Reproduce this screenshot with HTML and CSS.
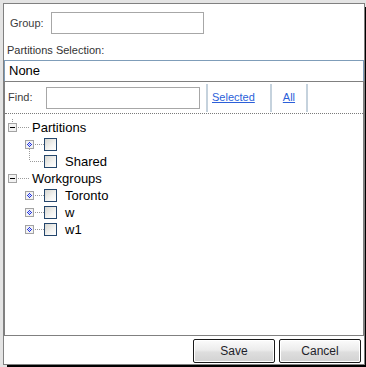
FILE: index.html
```html
<!DOCTYPE html>
<html lang="en">
<head>
  <meta charset="UTF-8">
  <title>Group Partitions</title>
  <link rel="stylesheet" href="styles.css">
</head>
<body>
  <div class="dialog">
    <!-- Group name -->
    <div class="group-row">
      <label class="field-label group-label">Group:</label>
      <input type="text" class="text-input group-input">
    </div>

    <div class="section-label">Partitions Selection:</div>
    <div class="selection-box">None</div>

    <div class="panel">
      <!-- Find bar -->
      <div class="find-row">
        <label class="field-label find-label">Find:</label>
        <input type="text" class="text-input find-input">
        <span class="sep"></span>
        <a href="#" class="find-link link-selected">Selected</a>
        <span class="sep"></span>
        <a href="#" class="find-link link-all">All</a>
        <span class="sep"></span>
      </div>

      <!-- Partition tree -->
      <div class="tree">
        <div class="node">
          <svg class="lines" width="26" height="17">
            <line x1="7.5" y1="0" x2="7.5" y2="4" class="dots"/>
            <rect x="3.5" y="4.5" width="8" height="8" class="box"/>
            <rect x="5" y="8" width="5" height="1" fill="#000"/>
            <line x1="13" y1="8.5" x2="24" y2="8.5" class="dots"/>
          </svg>
          <span class="node-text">Partitions</span>
        </div>
        <div class="node">
          <span class="indent"></span>
          <svg class="lines" width="22" height="17">
            <rect x="3.5" y="4.5" width="8" height="8" class="box"/>
            <path d="M7 6h1v1h-1zM6 7h1v1h-1zM8 7h1v1h-1zM5 8h1v1h-1zM9 8h1v1h-1zM6 9h1v1h-1zM8 9h1v1h-1zM7 10h1v1h-1z" class="plus"/>
            <rect x="7" y="8" width="1" height="1" class="plus-dot"/>
            <line x1="7.5" y1="13" x2="7.5" y2="17" class="dots"/>
            <line x1="13" y1="8.5" x2="22" y2="8.5" class="dots"/>
          </svg>
          <span class="check"></span>
        </div>
        <div class="node">
          <span class="indent"></span>
          <svg class="lines" width="22" height="17">
            <line x1="7.5" y1="0" x2="7.5" y2="8" class="dots"/>
            <line x1="8" y1="8.5" x2="22" y2="8.5" class="dots"/>
          </svg>
          <span class="check"></span>
          <span class="node-text leaf-text">Shared</span>
        </div>
        <div class="node">
          <svg class="lines" width="26" height="17">
            <rect x="3.5" y="4.5" width="8" height="8" class="box"/>
            <rect x="5" y="8" width="5" height="1" fill="#000"/>
            <line x1="13" y1="8.5" x2="24" y2="8.5" class="dots"/>
          </svg>
          <span class="node-text">Workgroups</span>
        </div>
        <div class="node">
          <span class="indent"></span>
          <svg class="lines" width="22" height="17">
            <rect x="3.5" y="4.5" width="8" height="8" class="box"/>
            <path d="M7 6h1v1h-1zM6 7h1v1h-1zM8 7h1v1h-1zM5 8h1v1h-1zM9 8h1v1h-1zM6 9h1v1h-1zM8 9h1v1h-1zM7 10h1v1h-1z" class="plus"/>
            <rect x="7" y="8" width="1" height="1" class="plus-dot"/>
            <line x1="13" y1="8.5" x2="22" y2="8.5" class="dots"/>
          </svg>
          <span class="check"></span>
          <span class="node-text leaf-text">Toronto</span>
        </div>
        <div class="node">
          <span class="indent"></span>
          <svg class="lines" width="22" height="17">
            <rect x="3.5" y="4.5" width="8" height="8" class="box"/>
            <path d="M7 6h1v1h-1zM6 7h1v1h-1zM8 7h1v1h-1zM5 8h1v1h-1zM9 8h1v1h-1zM6 9h1v1h-1zM8 9h1v1h-1zM7 10h1v1h-1z" class="plus"/>
            <rect x="7" y="8" width="1" height="1" class="plus-dot"/>
            <line x1="13" y1="8.5" x2="22" y2="8.5" class="dots"/>
          </svg>
          <span class="check"></span>
          <span class="node-text leaf-text">w</span>
        </div>
        <div class="node">
          <span class="indent"></span>
          <svg class="lines" width="22" height="17">
            <rect x="3.5" y="4.5" width="8" height="8" class="box"/>
            <path d="M7 6h1v1h-1zM6 7h1v1h-1zM8 7h1v1h-1zM5 8h1v1h-1zM9 8h1v1h-1zM6 9h1v1h-1zM8 9h1v1h-1zM7 10h1v1h-1z" class="plus"/>
            <rect x="7" y="8" width="1" height="1" class="plus-dot"/>
            <line x1="13" y1="8.5" x2="22" y2="8.5" class="dots"/>
          </svg>
          <span class="check"></span>
          <span class="node-text leaf-text">w1</span>
        </div>
      </div>
    </div>

    <!-- Dialog buttons -->
    <div class="button-bar">
      <button class="button">Save</button>
      <button class="button">Cancel</button>
    </div>
  </div>
</body>
</html>
```

FILE: styles.css
```css
/* Page around the dialog */
body {
  margin: 0;
  padding: 3px 0 0 3px;
  background: #e4e4e4;
  font-family: 'Liberation Sans', Arial, sans-serif;
  color: #000;
  height: 367px;
  box-sizing: border-box;
  overflow: hidden;
}

.dialog {
  box-sizing: border-box;
  width: 362px;
  height: 362px;
  border: 1px solid #808080;
  background: #fff;
  box-shadow: 3px 3px 0 -1px #000;
  display: flex;
  flex-direction: column;
}

.field-label {
  font-size: 11px;
  color: #3c3c3c;
}

.text-input {
  box-sizing: border-box;
  height: 22px;
  margin: 0;
  padding: 0 3px;
  border: 1px solid #a7a7a7;
  background: #fff;
}

/* Group row */
.group-row {
  box-sizing: border-box;
  height: 30px;
  padding: 8px 0 0 6px;
  display: flex;
  align-items: center;
}

.group-label {
  width: 41px;
}

.group-input {
  width: 153px;
}

.section-label {
  font-size: 11px;
  line-height: 13px;
  color: #333;
  padding: 10px 0 0 3px;
  margin-bottom: 3px;
}

.selection-box {
  box-sizing: border-box;
  height: 21px;
  border: 1px solid #7f9db9;
  border-bottom: none;
  font-size: 13px;
  line-height: 20px;
  padding-left: 4px;
}

.panel {
  flex: 1;
  border: 1px solid #808080;
  display: flex;
  flex-direction: column;
}

/* Find bar */
.find-row {
  display: flex;
  align-items: stretch;
  padding: 2px 0 1px 3px;
  height: 28px;
  border-bottom: 1px dotted #7a7a7a;
}

.find-label {
  width: 38px;
  line-height: 27px;
}

.find-input {
  width: 154px;
  align-self: center;
}

.sep {
  width: 2px;
  background: #c5d2dd;
}

.sep:first-of-type {
  margin-left: 6px;
}

.find-link {
  font-size: 11px;
  line-height: 27px;
  color: #2b5fd9;
}

.link-selected {
  padding: 0 15px 0 4px;
}

.link-all {
  padding: 0 11px;
}

/* Tree */
.tree {
  flex: 1;
  padding-top: 5px;
}

.node {
  display: flex;
  align-items: center;
  height: 17px;
}

.lines {
  display: block;
  flex: none;
}

.lines .dots {
  stroke: #9a9a9a;
  stroke-width: 1;
  stroke-dasharray: 1 1;
}

.lines .box {
  fill: #f2f2f2;
  stroke: #a3a3a3;
}

.lines .plus {
  fill: #1d2fe8;
}

.lines .plus-dot {
  fill: #6f86f0;
}

.indent {
  width: 17px;
  flex: none;
}

.check {
  box-sizing: border-box;
  width: 13px;
  height: 13px;
  flex: none;
  border: 1px solid #24466c;
  background: linear-gradient(135deg, #d6d6d0, #f4f4f2 60%, #fff);
}

.node-text {
  font-size: 13px;
  line-height: 17px;
  padding-left: 1px;
}

.leaf-text {
  padding-left: 8px;
}

/* Buttons */
.button-bar {
  box-sizing: border-box;
  height: 28px;
  display: flex;
  justify-content: flex-end;
  gap: 4px;
  padding: 3px 3px 1px 0;
}

.button {
  width: 82px;
  height: 24px;
  margin: 0;
  border: 1px solid #1a1a1a;
  border-radius: 2px;
  background: linear-gradient(#fbfbfb, #ececec 45%, #dedede 55%, #d2d2d2);
  box-shadow: inset 0 0 0 1px #fff;
  font-family: 'Liberation Sans', Arial, sans-serif;
  font-size: 12px;
  color: #1e1e2a;
  cursor: pointer;
}
```
